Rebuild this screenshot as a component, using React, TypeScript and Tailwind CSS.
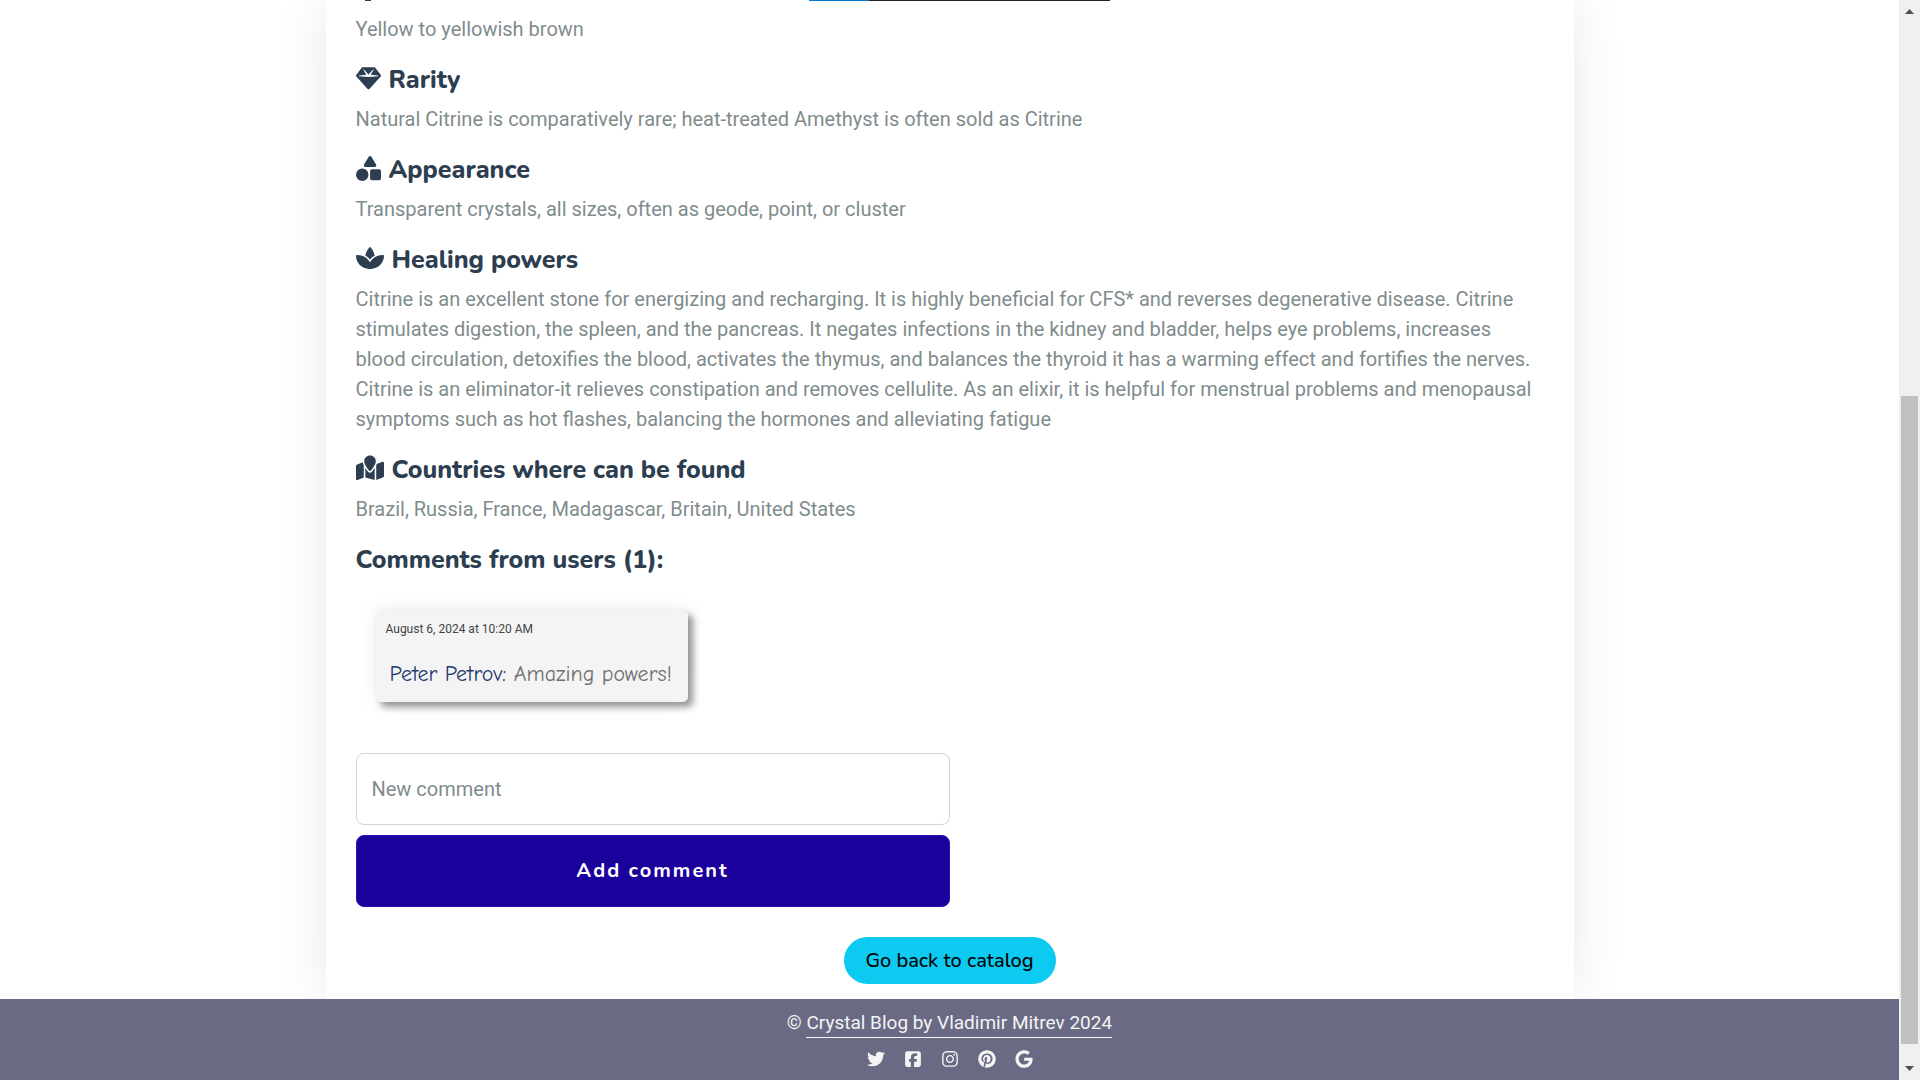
import React from 'react';
import { FaGem, FaShapes, FaSpa, FaMapLocation, FaTwitter, FaSquareFacebook, FaInstagram, FaPinterest, FaGoogle } from 'react-icons/fa6';

const sections = [
  { title: 'Rarity', icon: <FaGem />, text: 'Natural Citrine is comparatively rare; heat-treated Amethyst is often sold as Citrine' },
  { title: 'Appearance', icon: <FaShapes />, text: 'Transparent crystals, all sizes, often as geode, point, or cluster' },
  {
    title: 'Healing powers',
    icon: <FaSpa className="text-[28px]" />,
    text: 'Citrine is an excellent stone for energizing and recharging. It is highly beneficial for CFS* and reverses degenerative disease. Citrine stimulates digestion, the spleen, and the pancreas. It negates infections in the kidney and bladder, helps eye problems, increases blood circulation, detoxifies the blood, activates the thymus, and balances the thyroid it has a warming effect and fortifies the nerves. Citrine is an eliminator-it relieves constipation and removes cellulite. As an elixir, it is helpful for menstrual problems and menopausal symptoms such as hot flashes, balancing the hormones and alleviating fatigue',
  },
  { title: 'Countries where can be found', icon: <FaMapLocation className="text-[28px]" />, text: 'Brazil, Russia, France, Madagascar, Britain, United States' },
];

const socials = [
  { label: 'Twitter', icon: <FaTwitter /> },
  { label: 'Facebook', icon: <FaSquareFacebook /> },
  { label: 'Instagram', icon: <FaInstagram /> },
  { label: 'Pinterest', icon: <FaPinterest /> },
  { label: 'Google', icon: <FaGoogle /> },
];

const headingClass =
  "mb-[10px] flex h-[30px] items-center gap-2 font-['Nunito','Open_Sans',sans-serif] text-[25px] font-extrabold leading-[32px] text-[#2c3e50]";

function Scrollbar() {
  return (
    <div aria-hidden="true" className="flex w-[21px] shrink-0 flex-col items-center bg-[#f0f0f0]">
      <svg className="mt-[9px] h-[5px] w-[9px]" viewBox="0 0 9 5" fill="#505050">
        <path d="M4.5 0 9 5H0z" />
      </svg>
      <div className="grow-[382]" />
      <div className="w-[17px] grow-[648] bg-[#c0c0c0]" />
      <div className="grow-[22]" />
      <svg className="mb-[9px] h-[5px] w-[9px]" viewBox="0 0 9 5" fill="#505050">
        <path d="M0 0h9L4.500 5z" />
      </svg>
    </div>
  );
}

export default function App() {
  return (
    <div className="flex min-h-screen bg-white font-['Roboto',sans-serif] text-[20px] leading-[30px] text-[#7f8c8d]">
      <div className="flex min-w-0 flex-1 flex-col overflow-hidden">
        <main className="mx-auto w-full max-w-[1248px] grow px-[30px] pb-[15px] shadow-[0_0_50px_rgba(0,0,0,0.09)]">
          <div aria-hidden="true" className="flex h-[14px] items-start">
            <div className="ml-[9px] h-px w-[6px] bg-[#2c3e50]" />
            <div className="ml-[438px] h-px w-[60px] bg-[#0078d4]" />
            <div className="h-px w-[241px] bg-[#222222]" />
          </div>
          <p className="mb-5">Yellow to yellowish brown</p>
          {sections.map((s) => (
            <section key={s.title}>
              <h2 className={headingClass}>
                <span className="pb-[2px]">{s.icon}</span>
                <span className="pt-[2px]">{s.title}</span>
              </h2>
              <p className="mb-5">{s.text}</p>
            </section>
          ))}
          <h2 className={headingClass}>
            <span className="pt-[2px]">Comments from users (1):</span>
          </h2>
          <article className="mx-5 mt-[36px] h-[92px] w-[312px] rounded-[5px] bg-[#f4f4f4] px-[10px] pt-[10px] shadow-[5px_5px_7px_rgba(0,0,0,0.4),0_0_20px_rgba(0,0,0,0.08)]">
            <time className="block text-[12px] leading-[18px] text-[#444444]">August 6, 2024 at 10:20 AM</time>
            <p className="mt-[21px] whitespace-nowrap pl-1 font-['Comic_Neue','Comic_Sans_MS','Open_Sans',sans-serif] text-[22px] leading-[30px] text-[#707070]">
              <span className="text-[#1f3a6e]">Peter Petrov:</span> Amazing powers!
            </p>
          </article>
          <form className="mt-[51px] flex w-1/2 flex-col gap-[10px]" onSubmit={(e) => e.preventDefault()}>
            <input
              type="text"
              aria-label="New comment"
              placeholder="New comment"
              className="h-[72px] w-full rounded-lg border border-[#ced4da] bg-white px-[15px] placeholder:text-[#7f8c8d]"
            />
            <button
              type="submit"
              className="h-[72px] w-full rounded-lg border border-[#2d0fb5] bg-[#1c009c] font-['Nunito','Open_Sans',sans-serif] font-bold tracking-[2px] text-white"
            >
              Add comment
            </button>
          </form>
          <div className="mt-[30px] flex justify-center">
            <a
              href="#catalog"
              className="flex h-[47px] w-[212px] items-center justify-center whitespace-nowrap rounded-full bg-[#0dcaf0] font-['Nunito','Open_Sans',sans-serif] font-medium text-black"
            >
              Go back to catalog
            </a>
          </div>
        </main>
        <footer className="flex h-[81px] flex-col items-center bg-[#6a6a84] pt-[10px] text-[19px] leading-[28px] text-[#f4f4f4]">
          <p>
            ©{' '}
            <a href="#home" className="inline-block border-b border-[#f4f4f4]">
              Crystal Blog by Vladimir Mitrev 2024
            </a>
          </p>
          <nav className="mt-3 flex gap-[19px] text-[18px]">
            {socials.map((s) => (
              <a key={s.label} href="#social" aria-label={s.label}>
                {s.icon}
              </a>
            ))}
          </nav>
        </footer>
      </div>
      <Scrollbar />
    </div>
  );
}
